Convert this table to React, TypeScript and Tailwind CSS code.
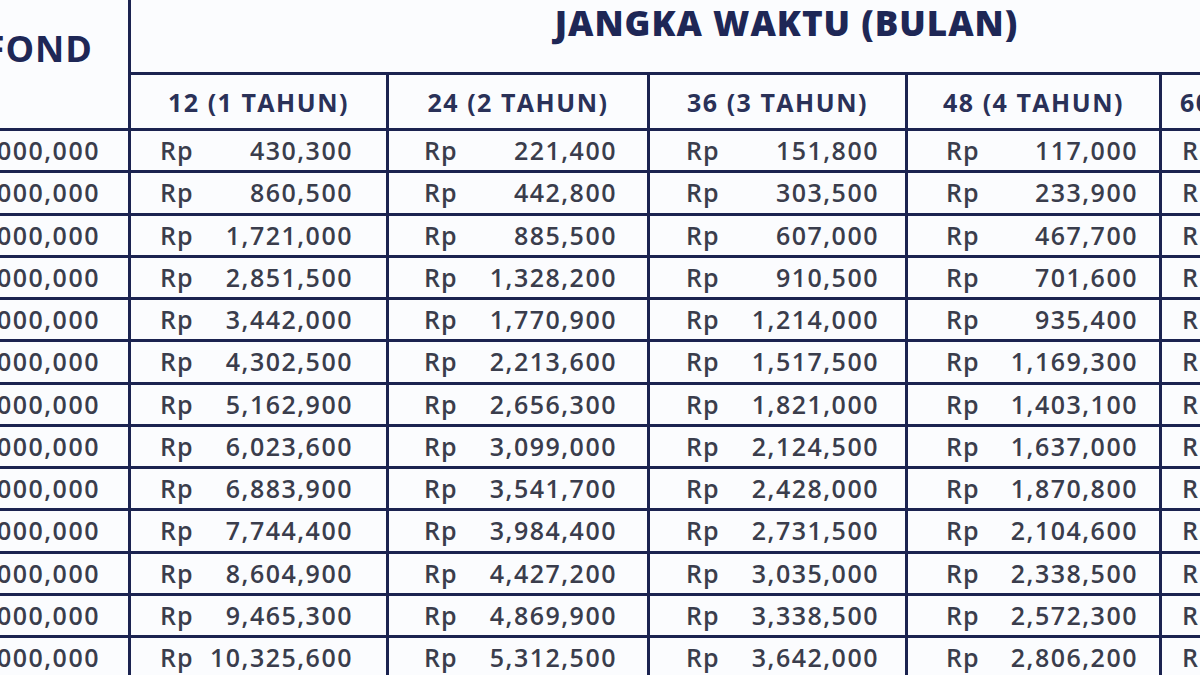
import React from "react";

const plafond = [
  "5,000,000", "10,000,000", "20,000,000", "30,000,000", "40,000,000", "50,000,000",
  "60,000,000", "70,000,000", "80,000,000", "90,000,000", "100,000,000", "110,000,000", "120,000,000",
];

const cols: string[][] = [
  ["430,300", "860,500", "1,721,000", "2,851,500", "3,442,000", "4,302,500", "5,162,900", "6,023,600", "6,883,900", "7,744,400", "8,604,900", "9,465,300", "10,325,600"],
  ["221,400", "442,800", "885,500", "1,328,200", "1,770,900", "2,213,600", "2,656,300", "3,099,000", "3,541,700", "3,984,400", "4,427,200", "4,869,900", "5,312,500"],
  ["151,800", "303,500", "607,000", "910,500", "1,214,000", "1,517,500", "1,821,000", "2,124,500", "2,428,000", "2,731,500", "3,035,000", "3,338,500", "3,642,000"],
  ["117,000", "233,900", "467,700", "701,600", "935,400", "1,169,300", "1,403,100", "1,637,000", "1,870,800", "2,104,600", "2,338,500", "2,572,300", "2,806,200"],
  ["97,000", "193,900", "387,700", "581,600", "775,400", "969,300", "1,163,100", "1,357,000", "1,550,800", "1,744,600", "1,938,500", "2,132,300", "2,326,200"],
];

const heads = ["12 (1 TAHUN)", "24 (2 TAHUN)", "36 (3 TAHUN)", "48 (4 TAHUN)", "60 (5 TAHUN)"];

const padClass = [
  "pl-[29px] pr-[33px]",
  "pl-[35px] pr-[30px]",
  "pl-[36px] pr-[26px]",
  "pl-[38px] pr-[21px]",
  "pl-[20px] pr-[30px]",
];

export default function App() {
  return (
    <div
      className="w-[1200px] h-[675px] overflow-hidden bg-[#fbfcfe]"
      style={{ fontFamily: '"Open Sans", "Noto Sans", sans-serif' }}
    >
      <div className="grid grid-cols-[128px_255px_258px_255px_251px_290px] grid-rows-[72px_53px_repeat(13,39.25px)] gap-[3px] bg-[#1b2350] w-[1449px]">
        <div className="row-span-2 bg-[#fbfcfe] flex items-start justify-end overflow-hidden pr-[35px] pt-[31px]">
          <span className="whitespace-nowrap text-[36px] leading-none font-bold text-[#1e2756] tracking-[1px]">PLAFOND</span>
        </div>
        <div className="col-span-5 bg-[#fbfcfe] flex items-start justify-center pt-[5px] pr-[10px]">
          <span className="whitespace-nowrap text-[35px] leading-none font-extrabold text-[#1e2756] tracking-[1px]">
            JANGKA WAKTU (BULAN)
          </span>
        </div>
        {heads.map((h, i) => (
          <div key={h} className={`bg-[#fbfcfe] flex items-center ${i === 4 ? "justify-start pl-[18px]" : "justify-center"} pt-[1px]`}>
            <span className="whitespace-nowrap text-[25px] leading-none font-bold text-[#2a3158] tracking-[1.5px]">{h}</span>
          </div>
        ))}
        {plafond.map((p, r) => (
          <React.Fragment key={p}>
            <div className="bg-[#fbfcfe] flex items-center justify-end overflow-hidden pr-[28px]">
              <span className="whitespace-nowrap text-[25px] leading-none font-semibold text-[#3a3d4c] tracking-[1.5px]">Rp {p}</span>
            </div>
            {cols.map((c, ci) => (
              <div key={ci} className={`bg-[#fbfcfe] flex items-center justify-between ${padClass[ci]}`}>
                <span className="text-[25px] leading-none font-semibold text-[#3a3d4c] tracking-[1px]">Rp</span>
                <span className="text-[25px] leading-none font-semibold text-[#3a3d4c] tracking-[1.5px]">{c[r]}</span>
              </div>
            ))}
          </React.Fragment>
        ))}
      </div>
    </div>
  );
}
